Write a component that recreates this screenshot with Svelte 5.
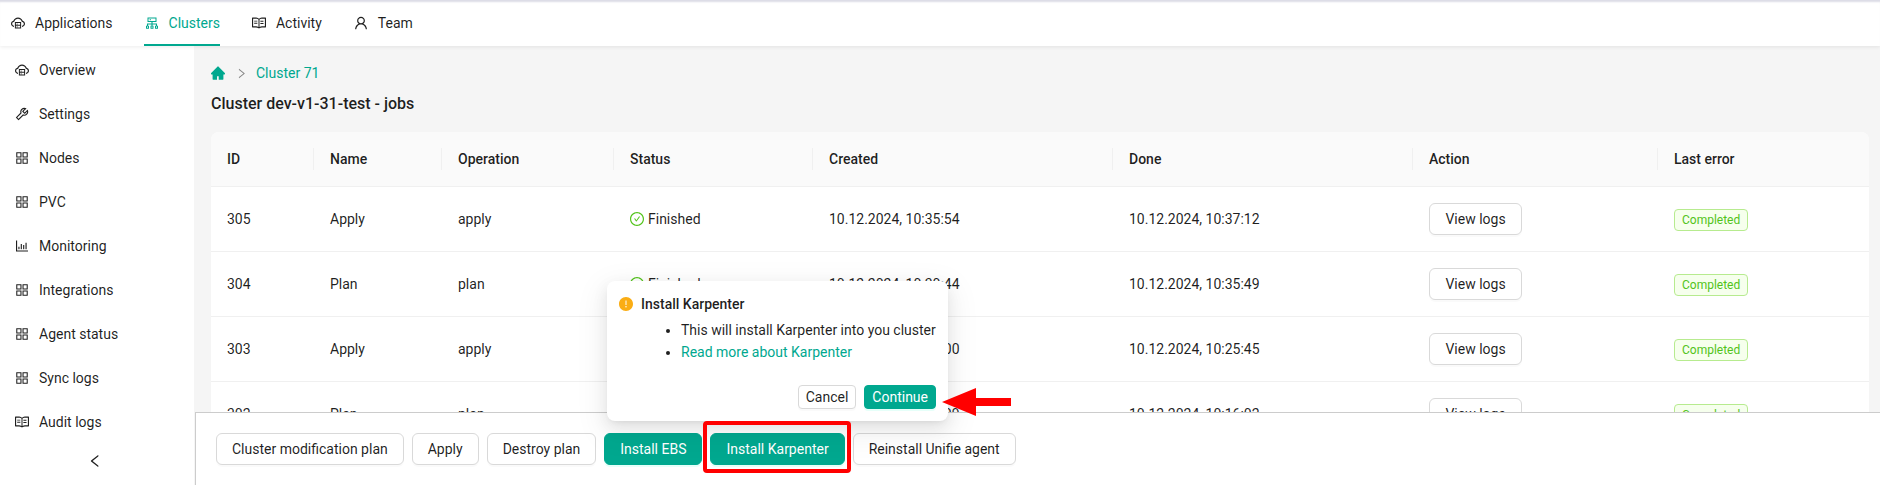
<script>
  const paths = {
    cloud: 'M704 446H320c-4.4 0-8 3.6-8 8v402c0 4.4 3.6 8 8 8h384c4.4 0 8-3.6 8-8V454c0-4.4-3.6-8-8-8zm-328 64h272v117H376V510zm272 290H376V683h272v117z M424 748a32 32 0 1064 0 32 32 0 10-64 0zm0-178a32 32 0 1064 0 32 32 0 10-64 0z M811.4 368.9C765.6 248 648.9 162 512.2 162S258.8 247.9 213 368.8C126.9 391.5 63.5 470.2 64 563.6 64.6 668 145.6 752.9 247.6 762c4.7.4 8.7-3.3 8.7-8v-60.4c0-4-3-7.4-7-7.9-27-3.4-52.5-15.2-72.1-34.5-24-23.5-37.2-55.1-37.2-88.6 0-28 9.1-54.4 26.2-76.4 16.7-21.4 40.2-36.9 66.1-43.7l37.9-10 13.9-36.7c8.6-22.8 20.6-44.2 35.7-63.5 14.9-19.2 32.6-36 52.4-50 41.1-28.9 89.5-44.2 140-44.2s98.9 15.3 140 44.3c19.9 14 37.5 30.8 52.4 50 15.1 19.3 27.1 40.7 35.7 63.5l13.8 36.6 37.8 10c54.2 14.4 92.1 63.7 92.1 120 0 33.6-13.2 65.1-37.2 88.6-19.5 19.2-44.9 31.1-71.9 34.5-4 .5-6.9 3.9-6.9 7.9V754c0 4.7 4.1 8.4 8.8 8 101.7-9.2 182.5-94 183.2-198.2.6-93.4-62.7-172.1-148.6-194.9z',
    cluster: 'M888 680h-54V540H546v-92h238c8.8 0 16-7.2 16-16V168c0-8.8-7.2-16-16-16H240c-8.8 0-16 7.2-16 16v264c0 8.8 7.2 16 16 16h238v92H190v140h-54c-4.4 0-8 3.6-8 8v176c0 4.4 3.6 8 8 8h176c4.4 0 8-3.6 8-8V688c0-4.4-3.6-8-8-8h-54v-72h220v72h-54c-4.4 0-8 3.6-8 8v176c0 4.4 3.6 8 8 8h176c4.4 0 8-3.6 8-8V688c0-4.4-3.6-8-8-8h-54v-72h220v72h-54c-4.4 0-8 3.6-8 8v176c0 4.4 3.6 8 8 8h176c4.4 0 8-3.6 8-8V688c0-4.4-3.6-8-8-8zM256 805.3c0 1.5-1.2 2.7-2.7 2.7h-58.7c-1.5 0-2.7-1.2-2.7-2.7v-58.7c0-1.5 1.2-2.7 2.7-2.7h58.7c1.5 0 2.7 1.2 2.7 2.7v58.7zm288 0c0 1.5-1.2 2.7-2.7 2.7h-58.7c-1.5 0-2.7-1.2-2.7-2.7v-58.7c0-1.5 1.2-2.7 2.7-2.7h58.7c1.5 0 2.7 1.2 2.7 2.7v58.7zM288 384V216h448v168H288zm544 421.3c0 1.5-1.2 2.7-2.7 2.7h-58.7c-1.5 0-2.7-1.2-2.7-2.7v-58.7c0-1.5 1.2-2.7 2.7-2.7h58.7c1.5 0 2.7 1.2 2.7 2.7v58.7zM360 300a40 40 0 1080 0 40 40 0 10-80 0z',
    read: 'M928 161H699.2c-49.1 0-97.1 14.1-138.4 40.7L512 233l-48.8-31.3A255.2 255.2 0 00324.8 161H96c-17.7 0-32 14.3-32 32v568c0 17.7 14.3 32 32 32h228.8c49.1 0 97.1 14.1 138.4 40.7l44.4 28.6c1.3.8 2.8 1.3 4.3 1.3s3-.4 4.3-1.3l44.4-28.6C602 807.1 650.1 793 699.2 793H928c17.7 0 32-14.3 32-32V193c0-17.7-14.3-32-32-32zM324.8 721H136V233h188.8c35.4 0 69.8 10.1 99.5 29.2l48.8 31.3 6.9 4.5v462c-47.6-25.6-100.8-39-155.2-39zm563.2 0H699.2c-54.4 0-107.6 13.4-155.2 39V298l6.9-4.5 48.8-31.3c29.7-19.1 64.1-29.2 99.5-29.2H888v488zM396.9 361H211.1c-3.9 0-7.1 3.4-7.1 7.5v45c0 4.1 3.2 7.5 7.1 7.5h185.7c3.9 0 7.1-3.4 7.1-7.5v-45c.1-4.1-3.1-7.5-7-7.5zm4 142H211.1c-3.9 0-7.1 3.4-7.1 7.5v45c0 4.1 3.2 7.5 7.1 7.5h189.7c3.9 0 7.1-3.4 7.1-7.5v-45c.1-4.1-3.1-7.5-7-7.5zm205.1-135h185.7c3.9 0 7.1 3.4 7.1 7.5v45c0 4.1-3.2 7.5-7.1 7.5H606c-3.9 0-7.1-3.4-7.1-7.5v-45c0-4.1 3.2-7.5 7.1-7.5zm0 142h189.7c3.9 0 7.1 3.4 7.1 7.5v45c0 4.1-3.2 7.5-7.1 7.5H606c-3.9 0-7.1-3.4-7.1-7.5v-45c0-4.1 3.2-7.5 7.1-7.5z',
    user: 'M858.5 763.6a374 374 0 00-80.6-119.5 375.63 375.63 0 00-119.5-80.6c-.4-.2-.8-.3-1.2-.5C719.5 518 760 444.7 760 362c0-137-111-248-248-248S264 225 264 362c0 82.7 40.5 156 102.8 201.1-.4.2-.8.3-1.2.5-44.8 18.9-85 46-119.5 80.6a375.63 375.63 0 00-80.6 119.5A371.7 371.7 0 00136 901.8a8 8 0 008 8.2h60c4.4 0 7.9-3.5 8-7.8 2-77.2 33-149.5 87.8-204.3 56.7-56.7 132-87.9 212.2-87.9s155.5 31.2 212.2 87.9C779 752.7 810 825 812 902.2c.1 4.4 3.6 7.8 8 7.8h60a8 8 0 008-8.2c-1-47.8-10.9-94.3-29.5-138.2zM512 534c-45.9 0-89.1-17.9-121.6-50.4S340 407.9 340 362c0-45.9 17.9-89.1 50.4-121.6S466.1 190 512 190s89.1 17.9 121.6 50.4S684 316.1 684 362c0 45.9-17.9 89.1-50.4 121.6S557.9 534 512 534z',
    tool: 'M876.6 239.5c-.5-.9-1.2-1.8-2-2.5-5-5-13.1-5-18.1 0L684.2 409.3l-67.9-67.9L788.7 169c.8-.8 1.4-1.6 2-2.5 3.6-6.1 1.6-13.9-4.5-17.5-98.2-58-226.8-44.7-311.3 39.7-67 67-89.2 162-66.5 247.4l-293 293c-3 3-2.8 7.9.3 11l169.7 169.7c3.1 3.1 8.1 3.3 11 .3l292.9-292.9c85.5 22.8 180.5.7 247.6-66.4 84.4-84.5 97.7-213.1 39.7-311.3zM786 499.8c-58.1 58.1-145.3 69.3-214.6 33.6l-8.8 8.8-.1-.1-274 274.1-79.2-79.2 230.1-230.1s0 .1.1.1l52.8-52.8c-35.7-69.3-24.5-156.5 33.6-214.6a184.2 184.2 0 01144-53.5L537 318.9a32.05 32.05 0 000 45.3l124.5 124.5a32.05 32.05 0 0045.3 0l132.8-132.8c3.7 51.8-14.4 104.8-53.6 143.9z',
    grid: 'M464 144H160c-8.8 0-16 7.2-16 16v304c0 8.8 7.2 16 16 16h304c8.8 0 16-7.2 16-16V160c0-8.8-7.2-16-16-16zm-52 268H212V212h200v200zm452-268H560c-8.8 0-16 7.2-16 16v304c0 8.8 7.2 16 16 16h304c8.8 0 16-7.2 16-16V160c0-8.8-7.2-16-16-16zm-52 268H612V212h200v200zM464 544H160c-8.8 0-16 7.2-16 16v304c0 8.8 7.2 16 16 16h304c8.8 0 16-7.2 16-16V560c0-8.8-7.2-16-16-16zm-52 268H212V612h200v200zm452-268H560c-8.8 0-16 7.2-16 16v304c0 8.8 7.2 16 16 16h304c8.8 0 16-7.2 16-16V560c0-8.8-7.2-16-16-16zm-52 268H612V612h200v200z',
    chart: 'M888 792H200V168c0-4.4-3.6-8-8-8h-56c-4.4 0-8 3.6-8 8v688c0 4.4 3.6 8 8 8h752c4.4 0 8-3.6 8-8v-56c0-4.4-3.6-8-8-8zm-600-80h56c4.4 0 8-3.6 8-8V560c0-4.4-3.6-8-8-8h-56c-4.4 0-8 3.6-8 8v144c0 4.4 3.6 8 8 8zm152 0h56c4.4 0 8-3.6 8-8V384c0-4.4-3.6-8-8-8h-56c-4.4 0-8 3.6-8 8v320c0 4.4 3.6 8 8 8zm152 0h56c4.4 0 8-3.6 8-8V462c0-4.4-3.6-8-8-8h-56c-4.4 0-8 3.6-8 8v242c0 4.4 3.6 8 8 8zm152 0h56c4.4 0 8-3.6 8-8V304c0-4.4-3.6-8-8-8h-56c-4.4 0-8 3.6-8 8v400c0 4.4 3.6 8 8 8z',
    home: 'M946.5 505L534.6 93.4a31.93 31.93 0 00-45.2 0L77.5 505c-12 12-18.8 28.3-18.8 45.3 0 35.3 28.7 64 64 64h43.4V908c0 17.7 14.3 32 32 32H448V716h112v224h265.9c17.7 0 32-14.3 32-32V614.3h43.4c17 0 33.3-6.7 45.3-18.8 24.9-25 24.9-65.5-.1-90.5z',
    right: 'M765.7 486.8L314.9 134.7A7.97 7.97 0 00302 141v77.3c0 4.9 2.3 9.6 6.1 12.6l360 281.1-360 281.1c-3.9 3-6.1 7.7-6.1 12.6V883c0 6.7 7.7 10.4 12.9 6.3l450.8-352.1a31.96 31.96 0 000-50.4z',
    left: 'M724 218.3V141c0-6.7-7.7-10.4-12.9-6.3L260.3 486.8a31.86 31.86 0 000 50.3l450.8 352.1c5.3 4.1 12.9.4 12.9-6.3v-77.3c0-4.9-2.3-9.6-6.1-12.6l-360-281 360-281.1c3.8-3 6.1-7.7 6.1-12.6z',
    check: 'M699 353h-46.9c-10.2 0-19.9 4.9-25.9 13.3L469 584.3l-71.2-98.8c-6-8.3-15.6-13.3-25.9-13.3H325c-6.5 0-10.3 7.4-6.5 12.7l124.6 172.8a31.8 31.8 0 0051.7 0l210.6-292c3.9-5.3.1-12.7-6.4-12.7z M512 64C264.6 64 64 264.6 64 512s200.6 448 448 448 448-200.6 448-448S759.4 64 512 64zm0 820c-205.4 0-372-166.6-372-372s166.6-372 372-372 372 166.6 372 372-166.6 372-372 372z',
    warn: 'M512 64C264.6 64 64 264.6 64 512s200.6 448 448 448 448-200.6 448-448S759.4 64 512 64zm-32 232c0-4.4 3.6-8 8-8h48c4.4 0 8 3.6 8 8v272c0 4.4-3.6 8-8 8h-48c-4.4 0-8-3.6-8-8V296zm32 440a48.01 48.01 0 010-96 48.01 48.01 0 010 96z'
  };

  const tabs = [
    { label: 'Applications', icon: 'cloud' },
    { label: 'Clusters', icon: 'cluster', active: true },
    { label: 'Activity', icon: 'read' },
    { label: 'Team', icon: 'user' }
  ];

  const menu = [
    { label: 'Overview', icon: 'cloud' },
    { label: 'Settings', icon: 'tool' },
    { label: 'Nodes', icon: 'grid' },
    { label: 'PVC', icon: 'grid' },
    { label: 'Monitoring', icon: 'chart' },
    { label: 'Integrations', icon: 'grid' },
    { label: 'Agent status', icon: 'grid' },
    { label: 'Sync logs', icon: 'grid' },
    { label: 'Audit logs', icon: 'read' }
  ];

  const columns = ['ID', 'Name', 'Operation', 'Status', 'Created', 'Done', 'Action', 'Last error'];

  const jobs = [
    { id: 305, name: 'Apply', op: 'apply', created: '10.12.2024, 10:35:54', done: '10.12.2024, 10:37:12' },
    { id: 304, name: 'Plan', op: 'plan', created: '10.12.2024, 10:30:44', done: '10.12.2024, 10:35:49' },
    { id: 303, name: 'Apply', op: 'apply', created: '10.12.2024, 10:24:00', done: '10.12.2024, 10:25:45' },
    { id: 302, name: 'Plan', op: 'plan', created: '10.12.2024, 10:14:09', done: '10.12.2024, 10:16:02' }
  ];
</script>

{#snippet icon(name)}
  <svg class="icon" viewBox="64 64 896 896" fill="currentColor" aria-hidden="true"><path d={paths[name]} /></svg>
{/snippet}

<div class="app">
  <header class="topbar">
    {#each tabs as tab}
      <a class="tab" class:active={tab.active} href="#top">
        {@render icon(tab.icon)}
        {tab.label}
      </a>
    {/each}
  </header>

  <div class="body">
    <aside class="sidebar">
      <nav class="menu">
        {#each menu as item}
          <a class="menu-item" href="#top">
            {@render icon(item.icon)}
            {item.label}
          </a>
        {/each}
      </nav>
      <div class="collapse">{@render icon('left')}</div>
    </aside>

    <div class="main">
      <div class="content">
        <div class="crumbs">
          <span class="crumb-home">{@render icon('home')}</span>
          <span class="crumb-sep">{@render icon('right')}</span>
          <a href="#top">Cluster 71</a>
        </div>
        <h1>Cluster dev-v1-31-test - jobs</h1>

        <table>
          <colgroup>
            <col class="c1" /><col class="c2" /><col class="c3" /><col class="c4" />
            <col class="c5" /><col class="c6" /><col class="c7" /><col class="c8" />
          </colgroup>
          <thead>
            <tr>
              {#each columns as col}
                <th>{col}</th>
              {/each}
            </tr>
          </thead>
          <tbody>
            {#each jobs as job}
              <tr>
                <td>{job.id}</td>
                <td>{job.name}</td>
                <td>{job.op}</td>
                <td><span class="status">{@render icon('check')}Finished</span></td>
                <td>{job.created}</td>
                <td>{job.done}</td>
                <td><button class="btn logs">View logs</button></td>
                <td><span class="tag">Completed</span></td>
              </tr>
            {/each}
          </tbody>
        </table>
      </div>

      <footer class="actions">
        <button class="btn">Cluster modification plan</button>
        <button class="btn">Apply</button>
        <button class="btn">Destroy plan</button>
        <button class="btn primary">Install EBS</button>
        <button class="btn primary">Install Karpenter</button>
        <button class="btn">Reinstall Unifie agent</button>
      </footer>
    </div>
  </div>

  <div class="popconfirm">
    <div class="pop-title">
      <span class="pop-warn">{@render icon('warn')}</span>
      Install Karpenter
    </div>
    <ul>
      <li>This will install Karpenter into you cluster</li>
      <li><a href="#top">Read more about Karpenter</a></li>
    </ul>
    <div class="pop-buttons">
      <button class="btn small">Cancel</button>
      <button class="btn small primary">Continue</button>
    </div>
  </div>

  <!-- red annotations drawn on top of the screenshot -->
  <div class="mark-box"></div>
  <svg class="mark-arrow" width="70" height="30" viewBox="0 0 70 30" aria-hidden="true">
    <path d="M0 15 L34 1 V11 H69 V19 H34 V29 Z" fill="#ff0000" />
  </svg>
</div>

<style>
  :global(body) {
    margin: 0;
  }

  .app {
    position: relative;
    display: flex;
    flex-direction: column;
    width: 1880px;
    height: 485px;
    overflow: hidden;
    background: #f5f5f5;
    font-family: Roboto, "Liberation Sans", sans-serif;
    font-size: 14px;
    line-height: 22px;
    color: rgba(0, 0, 0, 0.88);
  }

  a {
    text-decoration: none;
    color: inherit;
  }

  .icon {
    display: block;
    width: 14px;
    height: 14px;
    flex: none;
  }

  .topbar {
    position: relative;
    z-index: 2;
    display: flex;
    gap: 32px;
    height: 46px;
    flex: none;
    padding-left: 11px;
    box-sizing: border-box;
    background: #fff;
    box-shadow: inset 0 3px 2px -1px #dcdce6, 0 1px 4px rgba(0, 0, 0, 0.08);
  }

  .tab {
    display: flex;
    align-items: center;
    gap: 10px;
    padding-top: 1px;
    box-sizing: border-box;
    border-bottom: 2px solid transparent;
  }

  .tab.active {
    margin-left: -1px;
    padding-left: 1px;
    color: #00a88f;
    border-bottom-color: #00a88f;
  }

  .body {
    display: flex;
    flex: 1;
    min-height: 0;
  }

  .sidebar {
    display: flex;
    flex-direction: column;
    width: 194px;
    flex: none;
    background: #fff;
  }

  .menu {
    flex: 1;
    min-height: 0;
    padding-top: 2px;
    overflow: hidden;
  }

  .menu-item {
    display: flex;
    align-items: center;
    gap: 10px;
    height: 44px;
    padding-left: 15px;
  }

  .collapse {
    display: flex;
    align-items: center;
    justify-content: center;
    height: 48px;
    flex: none;
    padding-right: 4px;
  }

  .main {
    display: flex;
    flex-direction: column;
    flex: 1;
    min-width: 0;
  }

  .content {
    flex: 1;
    min-height: 0;
    overflow: hidden;
    padding: 16px 11px 0 17px;
  }

  .crumbs {
    display: flex;
    align-items: center;
    height: 22px;
  }

  .crumbs a {
    color: #00a88f;
  }

  .crumb-home {
    color: #00a88f;
  }

  .crumb-sep {
    margin: 0 9px 0 11px;
    color: rgba(0, 0, 0, 0.45);
  }

  .crumb-sep :global(svg) {
    width: 11px;
    height: 11px;
  }

  h1 {
    margin: 8px 0 16px;
    font-size: 16px;
    font-weight: 500;
    line-height: 24px;
  }

  table {
    width: 1658px;
    table-layout: fixed;
    border-collapse: separate;
    border-spacing: 0;
    background: #fff;
    border-radius: 8px 8px 0 0;
  }

  .c1 { width: 103px; }
  .c2 { width: 128px; }
  .c3 { width: 172px; }
  .c4 { width: 199px; }
  .c5 { width: 300px; }
  .c6 { width: 300px; }
  .c7 { width: 245px; }
  .c8 { width: 211px; }

  th {
    position: relative;
    padding: 16px;
    text-align: left;
    font-weight: 500;
    background: #fafafa;
    border-bottom: 1px solid #f0f0f0;
  }

  th:first-child {
    border-top-left-radius: 8px;
  }

  th:last-child {
    border-top-right-radius: 8px;
  }

  th:not(:last-child)::after {
    content: '';
    position: absolute;
    top: 16px;
    right: 0;
    width: 1px;
    height: 22px;
    background: #f0f0f0;
  }

  td {
    padding: 16px;
    border-bottom: 1px solid #f0f0f0;
    height: 32px;
  }

  .status {
    display: flex;
    align-items: center;
    gap: 4px;
  }

  .status :global(svg) {
    color: #52c41a;
  }

  .tag {
    display: inline-block;
    padding: 0 7px;
    font-size: 12px;
    line-height: 20px;
    color: #52c41a;
    background: #f6ffed;
    border: 1px solid #b7eb8f;
    border-radius: 4px;
    vertical-align: middle;
  }

  .btn {
    height: 32px;
    padding: 0 15px;
    font: inherit;
    color: rgba(0, 0, 0, 0.88);
    background: #fff;
    border: 1px solid #d9d9d9;
    border-radius: 6px;
    box-shadow: 0 2px 0 rgba(0, 0, 0, 0.02);
    cursor: pointer;
  }

  .btn.logs {
    width: 93px;
    padding: 0;
  }

  .btn.primary {
    color: #fff;
    background: #00a88f;
    border-color: #00a88f;
    box-shadow: 0 2px 0 rgba(5, 255, 200, 0.1);
  }

  .btn.small {
    height: 24px;
    padding: 0 7px;
    border-radius: 4px;
  }

  .actions {
    display: flex;
    gap: 8px;
    height: 73px;
    flex: none;
    box-sizing: border-box;
    margin-left: 1px;
    padding: 20px 20px 0;
    background: #fff;
    border-top: 1px solid #ccc;
    border-left: 1px solid #ccc;
  }

  .popconfirm {
    position: absolute;
    left: 607px;
    top: 281px;
    width: 341px;
    height: 140px;
    box-sizing: border-box;
    padding: 12px;
    background: #fff;
    border-radius: 8px;
    box-shadow: 0 6px 16px rgba(0, 0, 0, 0.08), 0 3px 6px -4px rgba(0, 0, 0, 0.12), 0 9px 28px 8px rgba(0, 0, 0, 0.05);
  }

  .pop-title {
    display: flex;
    align-items: center;
    gap: 8px;
    font-weight: 500;
  }

  .pop-warn {
    color: #faad14;
  }

  ul {
    margin: 4px 0 0 22px;
    padding-left: 40px;
  }

  ul a {
    color: #00a88f;
  }

  .pop-buttons {
    display: flex;
    justify-content: flex-end;
    gap: 8px;
    position: absolute;
    right: 12px;
    bottom: 12px;
  }

  .mark-box {
    position: absolute;
    left: 703px;
    top: 421px;
    width: 148px;
    height: 52px;
    box-sizing: border-box;
    border: 4px solid #ff0000;
    border-radius: 4px;
  }

  .mark-arrow {
    position: absolute;
    left: 942px;
    top: 387px;
  }
</style>
